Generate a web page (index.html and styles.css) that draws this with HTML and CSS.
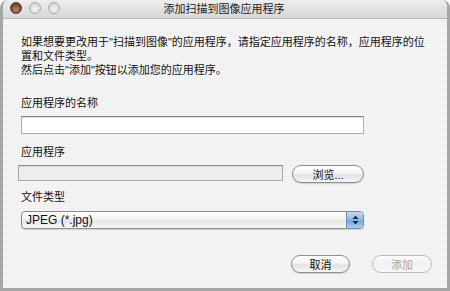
FILE: index.html
```html
<!DOCTYPE html>
<html lang="zh-CN">
<head>
<meta charset="utf-8">
<title>添加扫描到图像应用程序</title>
<link rel="stylesheet" href="styles.css">
</head>
<body>
<div class="window">
  <div class="titlebar">
    <div class="lights">
      <span class="light close"></span>
      <span class="light"></span>
      <span class="light"></span>
    </div>
    <div class="title">添加扫描到图像应用程序</div>
  </div>
  <div class="content">
    <div class="intro">
      <div class="intro-line">如果想要更改用于"扫描到图像"的应用程序，请指定应用程序的名称，应用程序的位</div>
      <div class="intro-line">置和文件类型。</div>
      <div class="intro-line">然后点击"添加"按钮以添加您的应用程序。</div>
    </div>
    <div class="label label-first">应用程序的名称</div>
    <div class="textbox"></div>
    <div class="label label-app">应用程序</div>
    <div class="row">
      <div class="pathbox"></div>
      <div class="btn btn-browse">浏览...</div>
    </div>
    <div class="label label-type">文件类型</div>
    <div class="select">
      <span class="select-text">JPEG (*.jpg)</span>
      <span class="select-arrows">
        <svg width="7" height="10" viewBox="0 0 7 10"><path d="M3.5 0.5 L6.5 4 L0.5 4 Z" fill="#1a2a40"/><path d="M0.5 6 L6.5 6 L3.5 9.5 Z" fill="#1a2a40"/></svg>
      </span>
    </div>
    <div class="actions">
      <div class="btn btn-cancel">取消</div>
      <div class="btn btn-add disabled">添加</div>
    </div>
  </div>
</div>
</body>
</html>
```
FILE: styles.css
```css
* { box-sizing: border-box; }
html, body { margin: 0; padding: 0; background: #ffffff; }
body {
  font-family: "Liberation Sans", "Noto Sans CJK SC", sans-serif;
  font-size: 11px;
  color: #111;
}
.window {
  width: 450px;
  height: 291px;
  display: flex;
  flex-direction: column;
  border-left: 3px solid #a7a7a7;
  border-right: 3px solid #a7a7a7;
  border-bottom: 3px solid #a7a7a7;
  border-radius: 8px 8px 0 0;
  overflow: hidden;
  background: repeating-linear-gradient(to bottom, #efefef 0px, #efefef 1px, #f6f6f6 1px, #f6f6f6 2px);
}
.titlebar {
  height: 19px;
  flex: none;
  position: relative;
  display: flex;
  align-items: center;
  justify-content: center;
  background: linear-gradient(to bottom, #eeeeee 0%, #e2e2e2 50%, #d9d9d9 100%);
  border-bottom: 1px solid #b5b5b5;
}
.lights {
  position: absolute;
  left: 7px;
  top: 2px;
  display: flex;
  gap: 7px;
}
.light {
  width: 12px;
  height: 12px;
  border-radius: 50%;
  background: radial-gradient(circle at 50% 65%, #f4f4f4 0%, #dedede 55%, #c6c6c6 100%);
  border: 1px solid #aaaaaa;
}
.light.close {
  background: radial-gradient(circle at 50% 65%, #b98b6e 0%, #7a4a34 55%, #4a2a1e 100%);
  border-color: #5a3a2c;
}
.title {
  font-size: 11px;
  color: #222;
  line-height: 14px;
  margin-left: -2px;
}
.content {
  flex: 1;
  padding: 16px 0 0 18px;
  display: flex;
  flex-direction: column;
}
.intro {
  display: flex;
  flex-direction: column;
}
.intro-line {
  white-space: nowrap;
  line-height: 14px;
  height: 14px;
  color: #111;
}
.label {
  line-height: 14px;
  color: #111;
}
.label-first { margin-top: 19px; }
.label-app { margin-top: 11px; }
.label-type { margin-top: 7px; }
.textbox {
  margin-top: 6px;
  width: 343px;
  height: 18px;
  background: #fff;
  border: 1px solid #b0b0b0;
  border-top-color: #7e7e7e;
  box-shadow: inset 0 1px 1px rgba(0,0,0,0.12);
}
.row {
  margin-top: 6px;
  display: flex;
  align-items: flex-start;
  margin-left: -3px;
}
.pathbox {
  width: 265px;
  height: 16px;
  background: #ededed;
  border: 1px solid #a8a8a8;
  border-top-color: #8c8c8c;
  box-shadow: inset 0 1px 1px rgba(0,0,0,0.08);
}
.btn {
  display: flex;
  align-items: center;
  justify-content: center;
  height: 18px;
  border-radius: 9px;
  border: 1px solid #8e8e8e;
  background: linear-gradient(to bottom, #ffffff 0%, #f3f3f3 45%, #e2e2e2 55%, #f6f6f6 100%);
  box-shadow: 0 1px 1px rgba(0,0,0,0.15);
  font-size: 11px;
  color: #111;
}
.btn-browse {
  margin-left: 9px;
  width: 72px;
}
.select {
  margin-top: 7px;
  width: 343px;
  height: 18px;
  display: flex;
  border: 1px solid #8a8a8a;
  border-radius: 4px;
  overflow: hidden;
  background: linear-gradient(to bottom, #ffffff 0%, #f4f4f4 45%, #e6e6e6 55%, #f7f7f7 100%);
  box-shadow: 0 1px 1px rgba(0,0,0,0.15);
}
.select-text {
  flex: 1;
  padding-left: 4px;
  font-size: 12px;
  line-height: 16px;
  color: #111;
}
.select-arrows {
  width: 17px;
  display: flex;
  align-items: center;
  justify-content: center;
  border-left: 1px solid #6f8fb0;
  background: linear-gradient(to bottom, #c6dcf3 0%, #93bde6 45%, #77a8dc 55%, #a9cdf0 100%);
}
.actions {
  margin-top: 26px;
  display: flex;
  padding-left: 270px;
  gap: 22px;
}
.btn-cancel { width: 59px; }
.btn-add { width: 60px; }
.btn.disabled {
  color: #a3a3a3;
  border-color: #bdbdbd;
  background: linear-gradient(to bottom, #fbfbfb 0%, #f2f2f2 50%, #f7f7f7 100%);
  box-shadow: none;
}
```
